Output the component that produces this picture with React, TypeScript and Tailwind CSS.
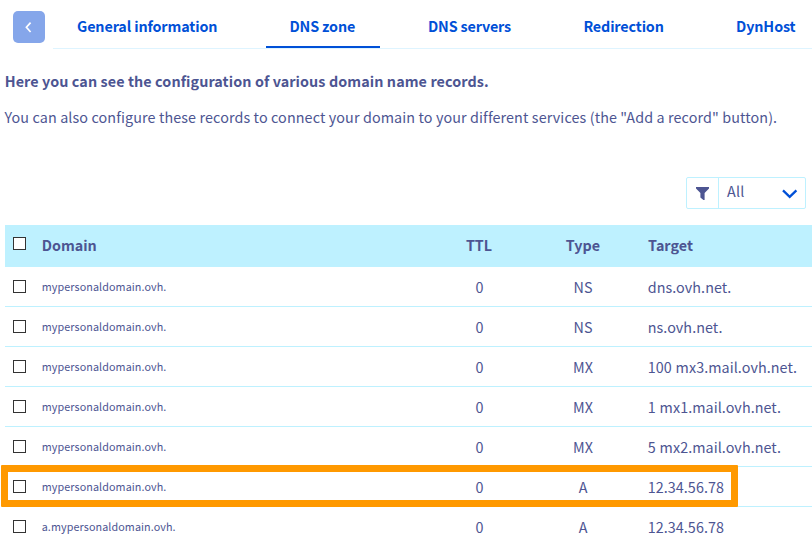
const tabs = [
  { label: 'General information', box: 'w-[213px] pl-[24px]', track: 'tracking-[-0.13px]' },
  { label: 'DNS zone', box: 'w-[114px] pl-[23.5px]', track: 'tracking-[-0.15px]', active: true },
  { label: 'DNS servers', box: 'w-[179px] pl-[48px]', track: 'tracking-[-0.16px]' },
  { label: 'Redirection', box: 'w-[129px] pl-[24.4px]', track: 'tracking-[-0.14px]' },
  { label: 'DynHost', box: 'w-[124px] pl-[48px]', track: 'tracking-[-0.1px]' },
];

const records = [
  { domain: 'mypersonaldomain.ovh.', ttl: 0, type: 'NS', target: 'dns.ovh.net.' },
  { domain: 'mypersonaldomain.ovh.', ttl: 0, type: 'NS', target: 'ns.ovh.net.' },
  { domain: 'mypersonaldomain.ovh.', ttl: 0, type: 'MX', target: '100 mx3.mail.ovh.net.' },
  { domain: 'mypersonaldomain.ovh.', ttl: 0, type: 'MX', target: '1 mx1.mail.ovh.net.' },
  { domain: 'mypersonaldomain.ovh.', ttl: 0, type: 'MX', target: '5 mx2.mail.ovh.net.' },
  { domain: 'mypersonaldomain.ovh.', ttl: 0, type: 'A', target: '12.34.56.78', highlight: true },
  { domain: 'a.mypersonaldomain.ovh.', ttl: 0, type: 'A', target: '12.34.56.78' },
];

const columns = 'grid grid-cols-[37px_388px_98px_110px_1fr]';

function Checkbox({ className }: { className: string }) {
  return (
    <input
      type="checkbox"
      className={`ml-2 block size-[13px] appearance-none border border-[#333] bg-white ${className}`}
    />
  );
}

export default function App() {
  return (
    <div className="h-[546px] w-[812px] overflow-hidden bg-white font-['Noto_Sans_CJK_SC',sans-serif] text-[14.35px] leading-5 whitespace-nowrap text-[#4d5592]">
      <header className="flex h-[49px]">
        <button
          aria-label="Back"
          className="mt-[11px] mr-[7px] ml-[13px] flex size-8 shrink-0 items-center justify-center rounded-[5px] bg-[#85a6ea]"
        >
          <svg viewBox="0 0 32 32" className="size-8" fill="none" stroke="white" strokeWidth="1.7">
            <path d="m17.6 11.6-4.2 4.7 4.2 4.7" />
          </svg>
        </button>
        <nav className="ml-px flex flex-1 border-b border-[#def4ff] font-bold text-[#0050d7]">
          {tabs.map((tab) => (
            <a
              key={tab.label}
              className={`block h-12 shrink-0 pt-4 ${tab.box} ${tab.track} ${tab.active ? 'border-b-2 border-[#0050d7]' : ''}`}
            >
              {tab.label}
            </a>
          ))}
        </nav>
      </header>

      <main className="pl-[5px]">
        <h1 className="-ml-[0.3px] pt-[22px] font-bold tracking-[0.09px]">
          Here you can see the configuration of various domain name records.
        </h1>
        <p className="-ml-[0.5px] pt-4 tracking-[0.108px]">
          You can also configure these records to connect your domain to your different services (the "Add a record" button).
        </p>

        <div className="mt-[50px] mr-[6px] ml-auto flex h-8 w-[120px] rounded-xs border border-[#bef1ff]">
          <div className="w-8 border-r border-[#bef1ff]">
            <svg viewBox="0 0 31 30" className="h-[30px] w-[31px]" fill="#4d5592">
              <path d="M9 9.1h13v1.4l-4.4 4.5v7h-1.2l-3-2.4V15L9 10.5z" />
            </svg>
          </div>
          <div className="flex flex-1 justify-between pl-2">
            <span className="pt-[3px] tracking-[0.2px]">All</span>
            <svg viewBox="0 0 30 30" className="size-[30px]" fill="none" stroke="#0050d7" strokeWidth="2.3">
              <path d="m8 12.4 6.7 6.4 6.7-6.4" />
            </svg>
          </div>
        </div>

        <section className="mt-4">
          <div className={`${columns} h-[42px] bg-[#bef1ff] font-bold`}>
            <Checkbox className="mt-3" />
            <span className="-ml-[0.3px] pt-[10px]">Domain</span>
            <span className="pt-[10px] text-center">TTL</span>
            <span className="pt-[10px] text-center">Type</span>
            <span className="pt-[10px] pl-[10px]">Target</span>
          </div>
          {records.map((record, i) => (
            <div key={i} className={`${columns} relative h-10 border-b border-[#bef1ff]`}>
              <Checkbox className="mt-[13px]" />
              <span className="-ml-[0.3px] pt-[10px] text-[10.75px] tracking-[0.1px]">{record.domain}</span>
              <span className="pt-[10px] pl-px text-center">{record.ttl}</span>
              <span className="pt-[10px] text-center">{record.type}</span>
              <span className="pt-[10px] pl-[9.7px] tracking-[0.06px] [word-spacing:0.6px]">{record.target}</span>
              {record.highlight && (
                <div className="absolute -top-[2px] -left-1 h-[42px] w-[737px] rounded-[1px] border-[7px] border-[#ff9900]" />
              )}
            </div>
          ))}
        </section>
      </main>
    </div>
  );
}
